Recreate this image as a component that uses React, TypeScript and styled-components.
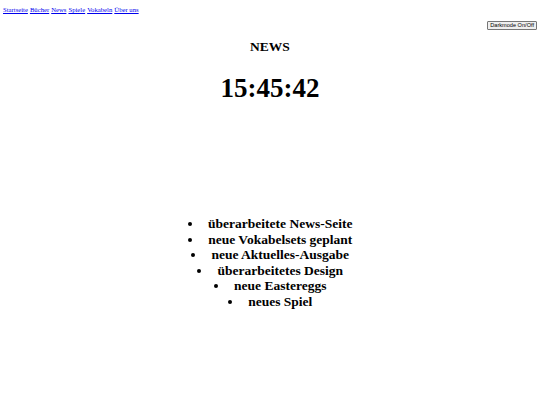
import React, { useEffect, useState } from "react";
import styled, { createGlobalStyle } from "styled-components";

const GlobalStyle = createGlobalStyle`
  html, body {
    margin: 0;
    padding: 0;
    background: #ffffff;
  }
  body {
    padding: 3px 3px;
    font-family: "Liberation Serif", "Times New Roman", serif;
    color: #000000;
  }
`;

const Nav = styled.nav`
  display: flex;
  gap: 2px;
  font-size: 6.7px;
  line-height: 8px;
  padding-top: 3px;
`;

const NavLink = styled.a`
  color: #0000ee;
  text-decoration: underline;
`;

const ButtonRow = styled.div`
  display: flex;
  justify-content: flex-end;
  margin-top: 7px;
`;

const ModeButton = styled.button`
  font-family: "Liberation Sans", Arial, sans-serif;
  font-size: 5.6px;
  line-height: 7px;
  padding: 0 2px;
  margin: 0;
  background: #efefef;
  border: 1px solid #767676;
  border-radius: 1px;
  color: #000000;
`;

const Title = styled.h1`
  text-align: center;
  font-size: 13.5px;
  font-weight: bold;
  margin: 9px 0 0;
  line-height: 16px;
`;

const Clock = styled.div`
  text-align: center;
  font-size: 27px;
  font-weight: bold;
  line-height: 31px;
  margin-top: 18px;
`;

const NewsList = styled.ul`
  list-style-position: inside;
  text-align: center;
  font-size: 13.5px;
  font-weight: bold;
  line-height: 15.6px;
  margin: 112px 0 0;
  padding: 0;
`;

const NewsItem = styled.li`
  & > span {
    margin-left: 2px;
  }
`;

const links = ["Startseite", "Bücher", "News", "Spiele", "Vokabeln", "Über uns"];

const news = [
  "überarbeitete News-Seite",
  "neue Vokabelsets geplant",
  "neue Aktuelles-Ausgabe",
  "überarbeitetes Design",
  "neue Eastereggs",
  "neues Spiel",
];

export default function App() {
  const [time] = useState("15:45:42");
  const [dark, setDark] = useState(false);

  useEffect(() => {
    document.body.style.background = dark ? "#222" : "#fff";
  }, [dark]);

  return (
    <>
      <GlobalStyle />
      <Nav>
        {links.map((l) => (
          <NavLink key={l} href="#">
            {l}
          </NavLink>
        ))}
      </Nav>
      <ButtonRow>
        <ModeButton onClick={() => setDark(!dark)}>Darkmode On/Off</ModeButton>
      </ButtonRow>
      <Title>NEWS</Title>
      <Clock>{time}</Clock>
      <NewsList>
        {news.map((n) => (
          <NewsItem key={n}>
            <span>{n}</span>
          </NewsItem>
        ))}
      </NewsList>
    </>
  );
}
